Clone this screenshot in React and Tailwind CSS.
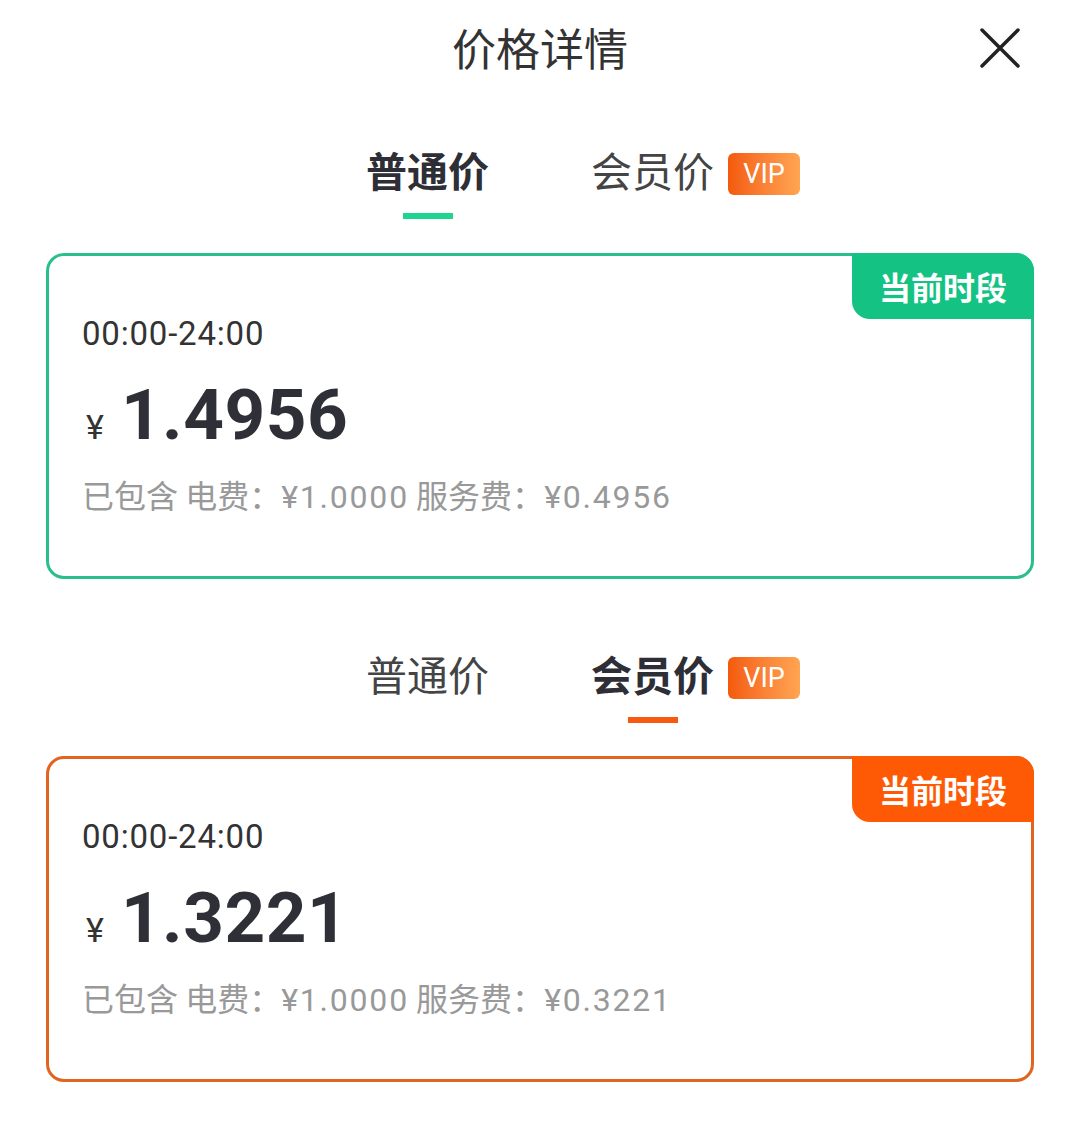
import React from "react";

const cjk = { fontFamily: '"Noto Sans CJK SC", "Noto Sans", sans-serif' };
const num = { fontFamily: 'Roboto, "Noto Sans CJK SC", sans-serif' };

function Tabs({ active }) {
  const green = active === 0;
  return (
    <div className="flex justify-center gap-[102px] h-[86px]" style={cjk}>
      <div className="relative flex flex-col items-center">
        <span className={`text-[41px] leading-[56px] ${green ? "font-bold text-[#2e2e36]" : "font-normal text-[#444]"}`}>普通价</span>
        {green && <span className="mt-[16px] block w-[50px] h-[6px] bg-[#1fd391]" />}
      </div>
      <div className="relative flex flex-col items-center">
        <span className={`text-[41px] leading-[56px] ${!green ? "font-bold text-[#2e2e36]" : "font-normal text-[#444]"}`}>会员价</span>
        {!green && <span className="mt-[16px] block w-[50px] h-[6px] bg-[#f55a10]" />}
        <span
          className="absolute left-full ml-[14px] top-[12px] w-[72px] h-[42px] rounded-[6px] flex items-center justify-center text-white text-[27px] leading-none bg-gradient-to-r from-[#f35a0a] to-[#ffa552]"
          style={num}
        >
          VIP
        </span>
      </div>
    </div>
  );
}

function Card({ color, badge, price, service }) {
  return (
    <div
      className="relative mx-[46px] rounded-[18px] border-[3px] bg-white pl-[33px] pt-[58px] pb-[59px]"
      style={{ borderColor: color }}
    >
      <div
        className="absolute -top-[3px] -right-[3px] w-[182px] h-[66px] rounded-tr-[18px] rounded-bl-[18px] flex items-center justify-center text-white text-[32px] font-bold"
        style={{ ...cjk, backgroundColor: badge }}
      >
        当前时段
      </div>
      <div className="text-[33px] leading-[40px] text-[#333] tracking-[0.8px]" style={num}>00:00-24:00</div>
      <div className="mt-[21px] flex items-end h-[80px]">
        <span className="text-[34px] leading-none text-[#333] mb-[11px] ml-[4px] mr-[17px]" style={num}>¥</span>
        <span className="text-[71px] leading-[80px] font-bold text-[#2f2f38] tracking-[0.5px]" style={num}>{price}</span>
      </div>
      <div className="mt-[19px] text-[32px] leading-[40px] text-[#999]" style={cjk}>
        已包含 电费：<span className="tracking-[1.8px]" style={num}>¥1.0000</span> 服务费：<span className="tracking-[1.8px]" style={num}>¥{service}</span>
      </div>
    </div>
  );
}

export default function App() {
  return (
    <div className="w-[1080px] h-[1122px] bg-white overflow-hidden" style={cjk}>
      <div className="relative h-[94px] flex items-center justify-center">
        <span className="text-[44px] text-[#333] leading-none">价格详情</span>
        <svg className="absolute left-[980px] top-[28px]" width="40" height="40" viewBox="0 0 40 40">
          <path d="M2 2 L38 38 M38 2 L2 38" stroke="#222" strokeWidth="3.5" strokeLinecap="round" />
        </svg>
      </div>
      <div className="pt-[47px]">
        <Tabs active={0} />
      </div>
      <div className="mt-[26px]">
        <Card color="#28bf8d" badge="#14c283" price="1.4956" service="0.4956" />
      </div>
      <div className="mt-[66px]">
        <Tabs active={1} />
      </div>
      <div className="mt-[25px]">
        <Card color="#e2651f" badge="#fe5a06" price="1.3221" service="0.3221" />
      </div>
    </div>
  );
}
